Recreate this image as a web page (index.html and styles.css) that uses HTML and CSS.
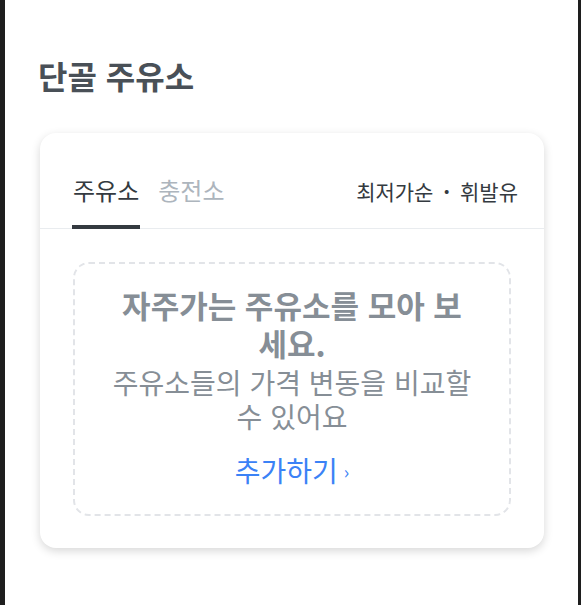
FILE: index.html
```html
<!DOCTYPE html>
<html lang="ko">
  <head>
    <meta charset="UTF-8" />
    <meta name="viewport" content="width=device-width, initial-scale=1.0" />
    <title>단골 주유소</title>
    <link rel="stylesheet" href="styles.css">
  </head>
  <body>
    <div class="screen">
      <h1 class="page-title">단골 주유소</h1>

      <div class="card">
        <div class="card-head">
          <div class="tabs">
            <span class="tab active">주유소</span>
            <span class="tab">충전소</span>
          </div>
          <div class="filter">최저가순 <span class="dot">·</span> 휘발유</div>
        </div>

        <div class="empty">
          <p class="empty-title">자주가는 주유소를 모아 보세요.</p>
          <p class="empty-desc">주유소들의 가격 변동을 비교할 수 있어요</p>
          <a class="add-link" href="#">추가하기<span class="chevron">›</span></a>
        </div>
      </div>
    </div>
  </body>
</html>
```

FILE: styles.css
```css
html, body {
  margin: 0;
  height: 100%;
}
body {
  background-color: #1e1e1e;
  font-family: "Noto Sans CJK KR", "Noto Sans", sans-serif;
}
.screen {
  background-color: #fff;
  margin: 0 3px 0 5px;
  min-height: 100%;
  padding: 50px 34px 0 35px;
  box-sizing: border-box;
}
.page-title {
  margin: 0 0 0 -2px;
  font-size: 32px;
  line-height: 50px;
  font-weight: 700;
  color: #495057;
}
.card {
  margin-top: 33px;
  background-color: #fff;
  border-radius: 16px;
  box-shadow: 0 3px 10px rgba(0, 0, 0, 0.16);
  padding-bottom: 32px;
}
.card-head {
  display: flex;
  justify-content: space-between;
  align-items: flex-end;
  height: 95px;
  padding: 0 26px 0 32px;
  border-bottom: 1px solid #e9ecef;
}
.tabs {
  display: flex;
  gap: 17px;
}
.tab {
  font-size: 24px;
  line-height: 30px;
  padding: 0 1px 20px;
  color: #adb5bd;
  border-bottom: 4px solid transparent;
  margin-bottom: -1px;
}
.tab.active {
  color: #343a40;
  border-bottom-color: #343a40;
}
.filter {
  font-size: 21px;
  line-height: 30px;
  color: #343a40;
  padding-bottom: 22px;
}
.filter .dot {
  margin: 0 4px;
  font-weight: 700;
}
.empty {
  margin: 33px 33px 0;
  border: 2px dashed #e2e4e8;
  border-radius: 16px;
  padding: 22px 34px 25px;
  text-align: center;
}
.empty-title {
  margin: 0;
  font-size: 31px;
  line-height: 38px;
  font-weight: 700;
  color: #868e96;
}
.empty-desc {
  margin: 3px 0 0;
  font-size: 28px;
  line-height: 34px;
  color: #868e96;
}
.add-link {
  display: inline-block;
  margin-top: 19px;
  font-size: 28px;
  line-height: 36px;
  color: #3b82f6;
  text-decoration: none;
}
.chevron {
  font-size: 18px;
  margin-left: 6px;
  vertical-align: 3px;
}
```
